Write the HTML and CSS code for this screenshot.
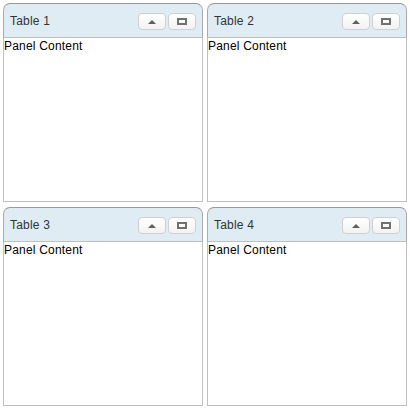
FILE: index.html
```html
<!DOCTYPE html>
<html>
<head>
  <meta charset="UTF-8">
  <title>Tables</title>
  <link rel="stylesheet" href="styles.css">
</head>
<body>
  <div class="panels">
    <div class="panel">
      <div class="panel-header">
        <span class="panel-title">Table 1</span>
        <button class="collapse" title="Collapse"><svg width="8" height="4" viewBox="0 0 8 4"><path d="M4 0L8 4H0z"/></svg></button>
        <button class="maximize" title="Maximize"><span class="window-icon"></span></button>
      </div>
      <div class="panel-body">Panel Content</div>
    </div>
    <div class="panel">
      <div class="panel-header">
        <span class="panel-title">Table 2</span>
        <button class="collapse" title="Collapse"><svg width="8" height="4" viewBox="0 0 8 4"><path d="M4 0L8 4H0z"/></svg></button>
        <button class="maximize" title="Maximize"><span class="window-icon"></span></button>
      </div>
      <div class="panel-body">Panel Content</div>
    </div>
    <div class="panel">
      <div class="panel-header">
        <span class="panel-title">Table 3</span>
        <button class="collapse" title="Collapse"><svg width="8" height="4" viewBox="0 0 8 4"><path d="M4 0L8 4H0z"/></svg></button>
        <button class="maximize" title="Maximize"><span class="window-icon"></span></button>
      </div>
      <div class="panel-body">Panel Content</div>
    </div>
    <div class="panel">
      <div class="panel-header">
        <span class="panel-title">Table 4</span>
        <button class="collapse" title="Collapse"><svg width="8" height="4" viewBox="0 0 8 4"><path d="M4 0L8 4H0z"/></svg></button>
        <button class="maximize" title="Maximize"><span class="window-icon"></span></button>
      </div>
      <div class="panel-body">Panel Content</div>
    </div>
  </div>
</body>
</html>
```
FILE: styles.css
```css
body {
  margin: 0;
  background-color: #fff;
  font-family: Arial, "Liberation Sans", sans-serif;
  font-size: 12px;
}
.panels {
  display: grid;
  grid-template-columns: 200px 200px;
  grid-auto-rows: 199px;
  gap: 5px 4px;
  padding: 3px;
}
.panel {
  display: flex;
  flex-direction: column;
}
.panel-header {
  display: flex;
  align-items: center;
  box-sizing: border-box;
  height: 35px;
  padding: 1px 6px 0;
  border: 1px solid #aaa;
  border-top-color: #999;
  border-bottom-color: #c0c0c0;
  border-radius: 7px 7px 0 0;
  background-color: #e0ecf4;
}
.panel-title {
  flex: 1;
  color: #333;
  letter-spacing: 0.2px;
}
button {
  display: flex;
  align-items: center;
  justify-content: center;
  box-sizing: border-box;
  width: 28px;
  height: 17px;
  margin-left: 2px;
  padding: 0;
  border: 1px solid #d0d0d0;
  border-radius: 4px;
  background: linear-gradient(#fff, #f2f2f2);
}
.collapse svg {
  display: block;
  margin-top: 1px;
  fill: #606060;
}
.window-icon {
  box-sizing: border-box;
  width: 10px;
  height: 7px;
  border: 2px solid #707070;
}
.panel-body {
  flex: 1;
  border: 1px solid #c0c0c0;
  border-top: none;
  color: #000;
  line-height: 17px;
  letter-spacing: 0.2px;
}
```
